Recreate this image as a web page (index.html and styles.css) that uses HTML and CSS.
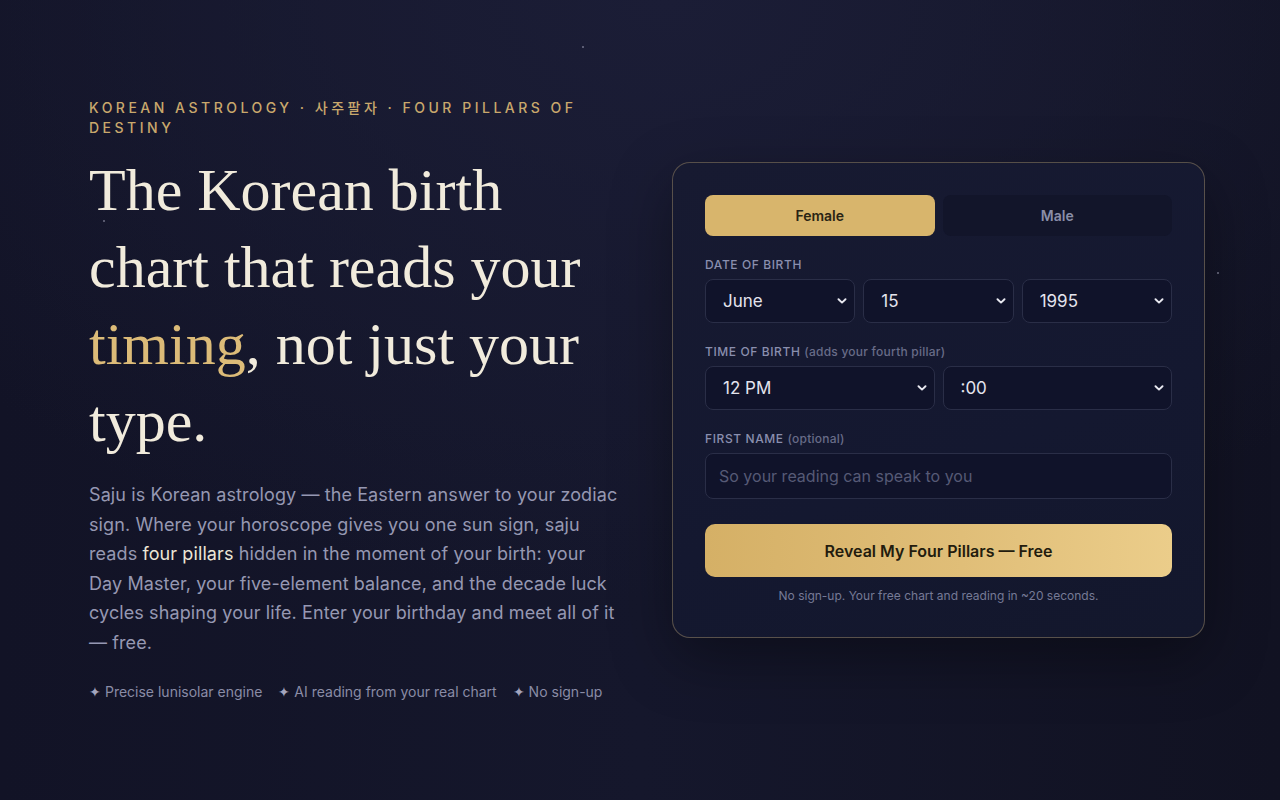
FILE: index.html
```html
<!DOCTYPE html>
<html lang="en">
<head>
    <meta charset="UTF-8">
    <meta name="viewport" content="width=device-width, initial-scale=1.0">
    <title>Saju — Korean Four Pillars Reading</title>
    <link rel="stylesheet" href="styles.css">
</head>
<body>

    <!-- faint stars scattered over the sky -->
    <span class="star" style="left: 582px; top: 46px;"></span>
    <span class="star" style="left: 1217px; top: 272px;"></span>
    <span class="star" style="left: 103px; top: 220px;"></span>

    <main class="hero">
        <section class="intro">
            <p class="eyebrow">Korean Astrology · 사주팔자 · Four Pillars of Destiny</p>
            <h1 class="headline">The Korean birth chart that reads your <em>timing</em>, not just your type.</h1>
            <p class="lede">
                Saju is Korean astrology — the Eastern answer to your zodiac sign. Where your horoscope gives you one sun sign, saju reads <strong>four pillars</strong> hidden in the moment of your birth: your Day Master, your five-element balance, and the decade luck cycles shaping your life. Enter your birthday and meet all of it — free.
            </p>
            <ul class="perks">
                <li><span class="spark">✦</span> Precise lunisolar engine</li>
                <li><span class="spark">✦</span> AI reading from your real chart</li>
                <li><span class="spark">✦</span> No sign-up</li>
            </ul>
        </section>

        <form class="card" onsubmit="return false">
            <div class="gender">
                <button type="button" class="gender-btn active">Female</button>
                <button type="button" class="gender-btn">Male</button>
            </div>

            <div class="field">
                <label>Date of birth</label>
                <div class="row row-3">
                    <div class="select">
                        <select>
                            <option>January</option><option>February</option><option>March</option>
                            <option>April</option><option>May</option><option selected>June</option>
                            <option>July</option><option>August</option><option>September</option>
                            <option>October</option><option>November</option><option>December</option>
                        </select>
                        <svg viewBox="0 0 10 6"><path d="M1.5 1.2 5 4.6l3.5-3.4"/></svg>
                    </div>
                    <div class="select">
                        <select>
                            <option>14</option><option selected>15</option><option>16</option>
                        </select>
                        <svg viewBox="0 0 10 6"><path d="M1.5 1.2 5 4.6l3.5-3.4"/></svg>
                    </div>
                    <div class="select">
                        <select>
                            <option>1994</option><option selected>1995</option><option>1996</option>
                        </select>
                        <svg viewBox="0 0 10 6"><path d="M1.5 1.2 5 4.6l3.5-3.4"/></svg>
                    </div>
                </div>
            </div>

            <div class="field">
                <label>Time of birth <span class="hint">(adds your fourth pillar)</span></label>
                <div class="row row-2">
                    <div class="select">
                        <select>
                            <option>11 AM</option><option selected>12 PM</option><option>1 PM</option>
                        </select>
                        <svg viewBox="0 0 10 6"><path d="M1.5 1.2 5 4.6l3.5-3.4"/></svg>
                    </div>
                    <div class="select">
                        <select>
                            <option selected>:00</option><option>:15</option><option>:30</option><option>:45</option>
                        </select>
                        <svg viewBox="0 0 10 6"><path d="M1.5 1.2 5 4.6l3.5-3.4"/></svg>
                    </div>
                </div>
            </div>

            <div class="field">
                <label>First name <span class="hint">(optional)</span></label>
                <input type="text" placeholder="So your reading can speak to you">
            </div>

            <button type="submit" class="reveal">Reveal My Four Pillars — Free</button>
            <p class="note">No sign-up. Your free chart and reading in ~20 seconds.</p>
        </form>
    </main>

    <script>
        document.querySelectorAll(".gender-btn").forEach(function (btn) {
            btn.addEventListener("click", function () {
                document.querySelectorAll(".gender-btn").forEach(function (b) {
                    b.classList.remove("active");
                });
                btn.classList.add("active");
            });
        });
    </script>

</body>
</html>
```

FILE: styles.css
```css
/* Night sky background */
* {
    box-sizing: border-box;
}

body {
    margin: 0;
    min-height: 100vh;
    background:
        radial-gradient(ellipse 900px 600px at 52% 0%, #1b1d36 0%, rgba(27, 29, 54, 0) 100%),
        linear-gradient(90deg, #121326 0%, #15172c 50%, #111222 100%);
    font-family: Inter, "Noto Sans", sans-serif;
    color: #e9e5da;
    display: flex;
    align-items: center;
}

.star {
    position: absolute;
    width: 2px;
    height: 2px;
    border-radius: 50%;
    background: rgba(220, 220, 240, 0.45);
}

/* Two column hero */
.hero {
    width: 1116px;
    margin-left: 89px;
    display: grid;
    grid-template-columns: 533px 533px;
    column-gap: 50px;
    align-items: center;
}

/* Left column */
.eyebrow {
    margin: 0;
    font-family: Inter, "Noto Sans CJK KR", sans-serif;
    font-size: 14px;
    line-height: 20px;
    font-weight: 500;
    letter-spacing: 0.25em;
    text-transform: uppercase;
    color: #c9a86c;
}

.headline {
    margin: 14px 0 0;
    max-width: 530px;
    font-family: "Liberation Serif", "DejaVu Serif", serif;
    font-size: 60px;
    line-height: 77px;
    font-weight: 400;
    color: #f1ebdc;
}

.headline em {
    font-style: normal;
    color: #dcbb78;
}

.lede {
    margin: 20px 0 0;
    font-size: 18px;
    line-height: 29.5px;
    letter-spacing: 0.1px;
    color: #9698b2;
}

.lede strong {
    font-weight: 400;
    color: #ece6d6;
}

.perks {
    list-style: none;
    margin: 25px 0 0;
    padding: 0;
    display: flex;
    gap: 16px;
    font-size: 14px;
    line-height: 20px;
    color: #8a8ca6;
}

.spark {
    color: #a3a5bd;
}

/* Form card */
.card {
    border: 1px solid rgba(196, 170, 118, 0.38);
    border-radius: 18px;
    padding: 32px 32px 33px;
    background: linear-gradient(160deg, #171a31 0%, #141830 60%, #13172c 100%);
    box-shadow: 0 20px 60px rgba(0, 0, 0, 0.35);
}

.gender {
    display: grid;
    grid-template-columns: 1fr 1fr;
    gap: 8px;
}

.gender-btn {
    height: 41px;
    border: none;
    border-radius: 8px;
    background: #12152a;
    color: #8a8ea8;
    font-family: Inter, sans-serif;
    font-size: 14px;
    font-weight: 600;
    cursor: pointer;
}

.gender-btn.active {
    background: #d8b56c;
    color: #2a2414;
}

.field {
    margin-top: 21px;
}

.field label {
    display: block;
    margin-bottom: 6px;
    font-size: 12px;
    line-height: 16px;
    font-weight: 500;
    letter-spacing: 0.05em;
    text-transform: uppercase;
    color: #8a8fae;
}

.field .hint {
    text-transform: none;
    letter-spacing: 0.02em;
    color: #686c88;
}

.row {
    display: grid;
    gap: 8px;
}

.row-3 {
    grid-template-columns: repeat(3, 1fr);
}

.row-2 {
    grid-template-columns: repeat(2, 1fr);
}

/* Custom select with chevron overlay */
.select {
    position: relative;
}

.select select,
.field input {
    width: 100%;
    height: 44px;
    padding: 0 17px;
    border: 1px solid #2a2e47;
    border-radius: 8px;
    background: #10132a;
    color: #e4e4ee;
    font-family: Inter, sans-serif;
    font-size: 17px;
    appearance: none;
    outline: none;
}

.select svg {
    position: absolute;
    right: 8px;
    top: 19px;
    width: 10px;
    height: 6px;
    fill: none;
    stroke: #e8e8f0;
    stroke-width: 1.9;
    stroke-linecap: round;
    stroke-linejoin: round;
    pointer-events: none;
}

.field input {
    height: 46px;
    padding: 0 13px;
    font-size: 16px;
}

.field input::placeholder {
    color: #565a76;
}

.reveal {
    display: block;
    width: 100%;
    height: 53px;
    margin-top: 25px;
    border: none;
    border-radius: 10px;
    background: linear-gradient(90deg, #d5b066 0%, #e0be78 55%, #ebcd8a 100%);
    color: #231c0e;
    font-family: Inter, sans-serif;
    font-size: 16px;
    font-weight: 600;
    cursor: pointer;
}

.note {
    margin: 11px 0 0;
    text-align: center;
    font-size: 12px;
    line-height: 16px;
    color: #767a96;
}
```
